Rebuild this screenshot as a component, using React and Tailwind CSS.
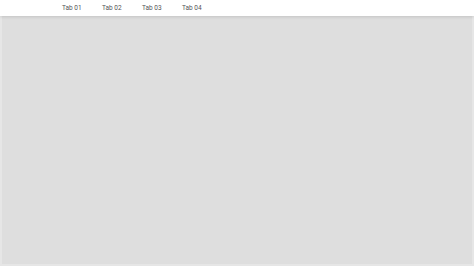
export default function App() {
  const tabs = ['Tab 01', 'Tab 02', 'Tab 03', 'Tab 04']

  return (
    <div className="h-[266px] w-[474px] flex flex-col bg-[#e6e6e6] font-['Roboto',sans-serif]">
      {/* Top tab bar */}
      <div className="relative z-10 h-[16px] bg-white shadow-[0_1px_3px_rgba(0,0,0,0.12)] flex items-center pl-[62px] gap-[22px]">
        {tabs.map(t => (
          <span key={t} className="text-[6.5px] leading-none text-[#555] w-[18px] whitespace-nowrap pt-[1px]">{t}</span>
        ))}
      </div>
      {/* Content area */}
      <div className="flex-1 mx-[2px] mb-[2px] bg-[#dedede]" />
    </div>
  )
}
